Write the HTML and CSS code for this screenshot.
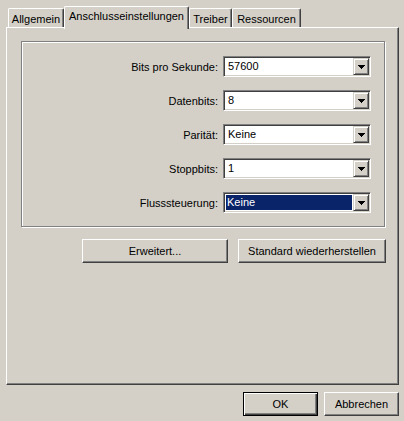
FILE: index.html
```html
<!DOCTYPE html>
<html lang="de">
<head>
    <meta charset="UTF-8">
    <title>Eigenschaften</title>
    <link rel="stylesheet" href="styles.css">
</head>
<body>
    <div class="dialog">
        <div class="tabs">
            <div class="tab tab-allgemein">Allgemein</div>
            <div class="tab tab-active">Anschlusseinstellungen</div>
            <div class="tab tab-treiber">Treiber</div>
            <div class="tab tab-ressourcen">Ressourcen</div>
        </div>
        <div class="panel">
            <div class="content">
                <div class="group">
                    <div class="row">
                        <span class="label">Bits pro Sekunde:</span>
                        <div class="combo"><span class="combo-value">57600</span><span class="combo-btn"><svg width="7" height="4"><path d="M0 0h7v1h-1v1h-1v1h-1v1h-1v-1h-1v-1h-1v-1h-1z"/></svg></span></div>
                    </div>
                    <div class="row">
                        <span class="label">Datenbits:</span>
                        <div class="combo"><span class="combo-value">8</span><span class="combo-btn"><svg width="7" height="4"><path d="M0 0h7v1h-1v1h-1v1h-1v1h-1v-1h-1v-1h-1v-1h-1z"/></svg></span></div>
                    </div>
                    <div class="row">
                        <span class="label">Parität:</span>
                        <div class="combo"><span class="combo-value">Keine</span><span class="combo-btn"><svg width="7" height="4"><path d="M0 0h7v1h-1v1h-1v1h-1v1h-1v-1h-1v-1h-1v-1h-1z"/></svg></span></div>
                    </div>
                    <div class="row">
                        <span class="label">Stoppbits:</span>
                        <div class="combo"><span class="combo-value">1</span><span class="combo-btn"><svg width="7" height="4"><path d="M0 0h7v1h-1v1h-1v1h-1v1h-1v-1h-1v-1h-1v-1h-1z"/></svg></span></div>
                    </div>
                    <div class="row">
                        <span class="label">Flusssteuerung:</span>
                        <div class="combo"><span class="combo-value selected">Keine</span><span class="combo-btn"><svg width="7" height="4"><path d="M0 0h7v1h-1v1h-1v1h-1v1h-1v-1h-1v-1h-1v-1h-1z"/></svg></span></div>
                    </div>
                </div>
                <div class="actions">
                    <button class="btn btn-erweitert">Erweitert...</button>
                    <button class="btn btn-standard">Standard wiederherstellen</button>
                </div>
            </div>
        </div>
        <div class="footer">
            <button class="btn btn-small btn-default">OK</button>
            <button class="btn btn-small">Abbrechen</button>
        </div>
    </div>
</body>
</html>
```

FILE: styles.css
```css
body {
    margin: 0;
    background-color: #d4d0c8;
    font-family: "Liberation Sans", Arial, sans-serif;
    font-size: 11px;
    color: #000000;
}
.dialog {
    width: 404px;
    height: 421px;
    padding-top: 6px;
    box-sizing: border-box;
}
.tabs {
    display: flex;
    align-items: flex-end;
    height: 21px;
    padding-left: 8px;
}
.tab {
    box-sizing: border-box;
    height: 19px;
    line-height: 16px;
    text-align: center;
    border-top: 1px solid #ffffff;
    border-left: 1px solid #ffffff;
    border-right: 1px solid #404040;
    box-shadow: inset -1px 0 0 #808080;
    border-radius: 2px 2px 0 0;
    padding-top: 2px;
}
.tab-allgemein {
    width: 56px;
}
.tab-active {
    position: relative;
    z-index: 1;
    width: 125px;
    height: 23px;
    margin-bottom: -2px;
    padding-top: 1px;
    background-color: #d4d0c8;
}
.tab-treiber {
    width: 43px;
}
.tab-ressourcen {
    width: 69px;
}
.panel {
    box-sizing: border-box;
    width: 393px;
    height: 358px;
    margin-left: 6px;
    border-top: 1px solid #ffffff;
    border-left: 1px solid #ffffff;
    border-right: 1px solid #404040;
    border-bottom: 1px solid #404040;
    box-shadow: inset -1px -1px 0 #808080;
    padding: 13px 0 0 14px;
}
.content {
    width: 365px;
}
.group {
    box-sizing: border-box;
    width: 364px;
    border: 1px solid #808080;
    box-shadow: inset 1px 1px 0 #ffffff, 1px 1px 0 #ffffff;
    padding: 14px 13px 13px 0;
    display: flex;
    flex-direction: column;
    gap: 13px;
}
.row {
    display: flex;
    justify-content: flex-end;
    align-items: center;
    gap: 5px;
}
.label {
    text-align: right;
}
.combo {
    box-sizing: border-box;
    width: 148px;
    height: 21px;
    display: flex;
    background-color: #ffffff;
    border-top: 1px solid #808080;
    border-left: 1px solid #808080;
    border-right: 1px solid #ffffff;
    border-bottom: 1px solid #ffffff;
    box-shadow: inset 1px 1px 0 #404040, inset -1px -1px 0 #d4d0c8;
    padding: 1px;
}
.combo-value {
    flex: 1;
    line-height: 17px;
    padding-left: 3px;
}
.combo-value.selected {
    background-color: #0a246a;
    color: #ffffff;
    margin: 1px 1px 1px 1px;
    line-height: 15px;
    padding-left: 1px;
}
.combo-btn {
    box-sizing: border-box;
    width: 16px;
    height: 17px;
    display: flex;
    align-items: center;
    justify-content: center;
    background-color: #d4d0c8;
    border-top: 1px solid #d4d0c8;
    border-left: 1px solid #d4d0c8;
    border-right: 1px solid #404040;
    border-bottom: 1px solid #404040;
    box-shadow: inset 1px 1px 0 #ffffff, inset -1px -1px 0 #808080;
}
.combo-btn svg {
    display: block;
    margin-top: 1px;
}
.actions {
    display: flex;
    justify-content: flex-end;
    gap: 10px;
    margin-top: 12px;
}
.btn {
    box-sizing: border-box;
    height: 24px;
    padding: 0;
    font-family: "Liberation Sans", Arial, sans-serif;
    font-size: 11px;
    color: #000000;
    background-color: #d4d0c8;
    border-top: 1px solid #ffffff;
    border-left: 1px solid #ffffff;
    border-right: 1px solid #404040;
    border-bottom: 1px solid #404040;
    box-shadow: inset -1px -1px 0 #808080;
}
.btn-erweitert {
    width: 146px;
}
.btn-standard {
    width: 148px;
}
.footer {
    display: flex;
    justify-content: flex-end;
    gap: 6px;
    margin-top: 7px;
    padding-right: 5px;
}
.btn-small {
    width: 75px;
}
.btn-default {
    border: 1px solid #000000;
    box-shadow: inset 1px 1px 0 #ffffff, inset -1px -1px 0 #404040, inset -2px -2px 0 #808080;
}
```
